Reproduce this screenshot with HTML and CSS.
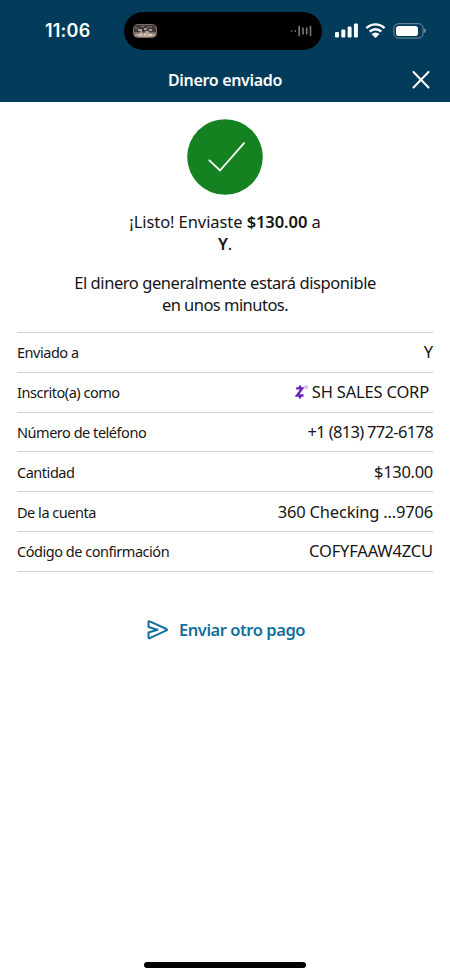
FILE: index.html
```html
<!DOCTYPE html>
<html lang="es">
<head>
<meta charset="utf-8">
<meta name="viewport" content="width=device-width, initial-scale=1">
<title>Dinero enviado</title>
<link rel="stylesheet" href="styles.css">
</head>
<body>
<header class="header">
  <div class="status">
    <span class="time">11:06</span>
    <div class="island">
      <svg class="thumb" width="24" height="14" viewBox="0 0 24 14" aria-hidden="true">
        <rect width="24" height="14" rx="5" fill="#776c66"/>
        <path d="M3 1h18l2 4v3H1V4z" fill="#41393a"/>
        <path d="M2 4h3M8 2.500h3M14 3h5" stroke="#a76e58" stroke-width="1.200"/>
        <path d="M5 6h4M11 5h3M16 6h3M7 8h2M12 8h4" stroke="#b9bdb7" stroke-width="1.500"/>
        <path d="M2 10q10-2 20 0v2q-10 2-20 0z" fill="#b9a394"/>
        <path d="M6 11h3M11 10.500h2M15 11h4" stroke="#e2d3c6" stroke-width="1.500"/>
      </svg>
      <svg class="wave" width="24" height="14" viewBox="0 0 24 14" fill="none" stroke="#85786f" stroke-width="1.600" stroke-linecap="round" aria-hidden="true">
        <path d="M1.500 7h.1M5.200 6.700v.6M9.200 2.500v9M13 4v6M16.700 4v6M20.500 2.500v9"/>
      </svg>
    </div>
    <svg class="signals" width="92" height="18" viewBox="0 0 92 18" aria-hidden="true">
      <g fill="#fff">
        <rect x="0" y="10" width="4" height="5.500" rx="1.200"/>
        <rect x="6.300" y="7.500" width="4" height="8" rx="1.200"/>
        <rect x="12.600" y="4.500" width="4" height="11" rx="1.200"/>
        <rect x="18.900" y="1.500" width="4" height="14" rx="1.200"/>
        <path d="M40.500 10.600q2.200 0 4 1.500l-3.400 3.400q-.6.600-1.200 0L36.500 12.100q1.800-1.500 4-1.500z"/>
        <rect x="61" y="4" width="22" height="10" rx="2.800"/>
      </g>
      <g fill="none" stroke="#fff" stroke-width="2.400">
        <path d="M31.400 6.200q4.100-3.800 9.100-3.800t9.100 3.800"/>
        <path d="M34.700 9.500q2.700-2.300 5.800-2.300t5.800 2.300"/>
      </g>
      <rect x="58.900" y="1.700" width="29.200" height="14.400" rx="4.600" fill="none" stroke="#7893a5"/>
      <path d="M89.200 6.500q1.800.5 1.800 2.300t-1.800 2.300z" fill="#7893a5"/>
    </svg>
  </div>
  <div class="titlebar">
    <h1 class="title">Dinero enviado</h1>
    <svg class="close" width="18" height="18" viewBox="0 0 18 18" aria-hidden="true">
      <path d="M1.500 1l15 15.500M16.500 1l-15 15.500" stroke="#fff" stroke-width="2" stroke-linecap="round"/>
    </svg>
  </div>
</header>
<main class="main">
  <svg class="success" width="76" height="76" viewBox="0 0 76 76" aria-hidden="true">
    <circle cx="38" cy="38" r="37.800" fill="#148221"/>
    <path d="M22.300 41.300L33 51.500 57 24.200" fill="none" stroke="#fff" stroke-width="1.800" stroke-linecap="round"/>
  </svg>
  <p class="message sent"><span>¡Listo! Enviaste <b>$130.00</b> a</span><br><b>Y</b>.</p>
  <p class="message available">El dinero generalmente estará disponible<br><span class="minutes">en unos minutos.</span></p>
  <dl class="details">
    <div class="row"><dt>Enviado a</dt><dd>Y</dd></div>
    <div class="row"><dt>Inscrito(a) como</dt><dd class="recipient">
      <svg class="zelle" width="14" height="16" viewBox="0 0 14 16" aria-hidden="true">
        <path d="M1.200 4.300H7.200L2 11.500H8.500M5 1.500V4M5 12v2.500" fill="none" stroke="#6722b5" stroke-width="2.300"/>
        <circle cx="11" cy="3.200" r="1.600" fill="#e6d5f2" stroke="#c5a2df" stroke-width=".8"/>
      </svg><span class="corp">SH SALES CORP</span></dd></div>
    <div class="row"><dt>Número de teléfono</dt><dd class="phone">+1 (813) 772-6178</dd></div>
    <div class="row"><dt>Cantidad</dt><dd class="amount">$130.00</dd></div>
    <div class="row"><dt>De la cuenta</dt><dd class="account">360 Checking ...9706</dd></div>
    <div class="row"><dt>Código de confirmación</dt><dd class="code">COFYFAAW4ZCU</dd></div>
  </dl>
  <a class="again">
    <svg width="22" height="20" viewBox="0 0 22 20" fill="none" stroke="#12709c" stroke-width="2" stroke-linejoin="round" stroke-linecap="round" aria-hidden="true">
      <path d="M1.500 2.200Q1.400 1 2.700 1.400L19.500 9q1.200.7 0 1.400L2.700 18.200q-1.300.4-1.200-.8V12.500L10.500 9.700 1.500 7z"/>
    </svg>
    <span>Enviar otro pago</span>
  </a>
</main>
<div class="home"></div>
</body>
</html>
```
FILE: styles.css
```css
* { box-sizing: border-box; }
body {
  margin: 0;
  height: 976px;
  display: flex;
  flex-direction: column;
  overflow: hidden;
  background: #fff;
  color: #161616;
  font-family: "Noto Sans", sans-serif;
}
.header { height: 102px; background: #033b5a; color: #fff; flex: none; }
.status { height: 58px; display: flex; align-items: center; padding: 3px 23px 0 45px; }
.time { width: 79px; font: 600 18px/22px Inter, sans-serif; letter-spacing: .2px; }
.island {
  width: 198px;
  height: 38px;
  display: flex;
  align-items: center;
  justify-content: space-between;
  padding: 0 8px 0 9px;
  border-radius: 19px;
  background: #000;
}
.signals { margin-left: 13px; flex: none; }
.titlebar {
  height: 44px;
  display: grid;
  grid-template-columns: 42px 1fr 42px;
  align-items: center;
}
.title { grid-column: 2; margin: 0; text-align: center; font-size: 16px; line-height: 22px; font-weight: 600; letter-spacing: -.32px; }
.close { margin-left: 4px; }
.main { flex: 1; display: flex; flex-direction: column; align-items: center; padding: 17px 17px 0; }
.success { flex: none; }
.message { margin: 0; text-align: center; font-size: 16.500px; line-height: 22px; white-space: nowrap; }
.sent { margin-top: 16px; letter-spacing: -.08px; }
.message b { font-weight: 600; }
.available { margin-top: 17px; letter-spacing: -.43px; }
.minutes { letter-spacing: -.53px; }
.details { width: 416px; margin: 16px 0 0; border-top: 1px solid #cfcfcf; }
.row {
  height: 39.800px;
  display: flex;
  align-items: center;
  justify-content: space-between;
  border-bottom: 1px solid #cfcfcf;
}
.row dt { font-size: 14.500px; line-height: 20px; letter-spacing: -.47px; }
.row dd { margin: 0; font-size: 16.500px; line-height: 22px; letter-spacing: -.18px; }
.row .phone { letter-spacing: -.68px; }
.row .amount { letter-spacing: -.3px; }
.row .account { letter-spacing: -.2px; }
.row .recipient { display: flex; align-items: center; gap: 3px; padding-right: 4px; }
.again {
  display: flex;
  align-items: center;
  gap: 10px;
  margin: 46px 0 0 2px;
  color: #12709c;
  font-size: 16.500px;
  line-height: 24px;
  font-weight: 600;
  letter-spacing: -.45px;
}
.home { width: 162px; height: 6px; margin: 0 auto 8px; border-radius: 3px; background: #000; }
```
